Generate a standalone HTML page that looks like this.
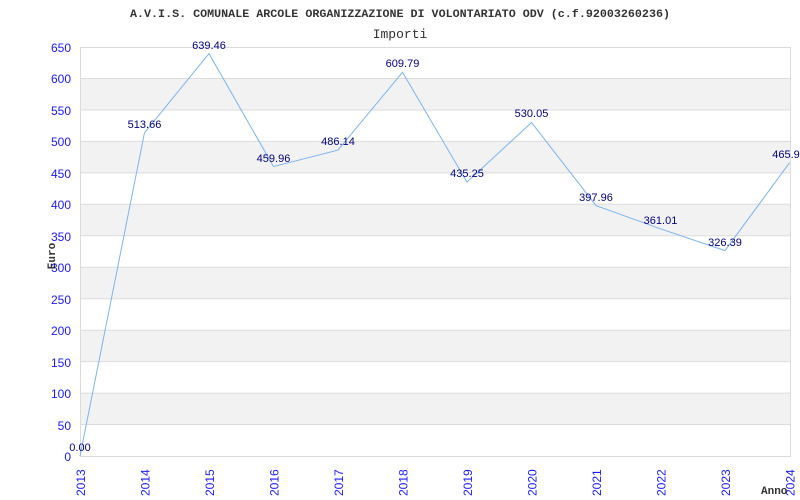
<!DOCTYPE html>
<html><head><style>body{margin:0;background:#fff}svg{display:block}</style></head><body>
<svg width="800" height="500" xmlns="http://www.w3.org/2000/svg" font-family="Liberation Sans, sans-serif">
<rect width="800" height="500" fill="#fff"/>
<g fill="#f2f2f2">
<rect x="80" y="78.5" width="710" height="31.5"/>
<rect x="80" y="141.4" width="710" height="31.5"/>
<rect x="80" y="204.3" width="710" height="31.5"/>
<rect x="80" y="267.2" width="710" height="31.5"/>
<rect x="80" y="330.2" width="710" height="31.5"/>
<rect x="80" y="393.1" width="710" height="31.5"/>
</g>
<g stroke="#dcdcdc" stroke-width="1">
<line x1="80" y1="47.5" x2="790" y2="47.5"/><line x1="80" y1="78.5" x2="790" y2="78.5"/>
<line x1="80" y1="110" x2="790" y2="110"/><line x1="80" y1="141.4" x2="790" y2="141.4"/>
<line x1="80" y1="172.9" x2="790" y2="172.9"/><line x1="80" y1="204.3" x2="790" y2="204.3"/>
<line x1="80" y1="235.8" x2="790" y2="235.8"/><line x1="80" y1="267.2" x2="790" y2="267.2"/>
<line x1="80" y1="298.7" x2="790" y2="298.7"/><line x1="80" y1="330.2" x2="790" y2="330.2"/>
<line x1="80" y1="361.6" x2="790" y2="361.6"/><line x1="80" y1="393.1" x2="790" y2="393.1"/>
<line x1="80" y1="424.5" x2="790" y2="424.5"/><line x1="80" y1="456.5" x2="790" y2="456.5"/>
<line x1="80.5" y1="47" x2="80.5" y2="457"/><line x1="790.5" y1="47" x2="790.5" y2="457"/>
</g>
<text x="130" y="17" textLength="540" lengthAdjust="spacingAndGlyphs" font-family="Liberation Mono, monospace" font-size="11" font-weight="bold" fill="#333">A.V.I.S. COMUNALE ARCOLE ORGANIZZAZIONE DI VOLONTARIATO ODV (c.f.92003260236)</text>
<text x="400" y="38" text-anchor="middle" font-family="Liberation Mono, monospace" font-size="13" fill="#333">Importi</text>
<g fill="#1a1aff" font-size="12" text-anchor="end">
<text x="71" y="52">650</text><text x="71" y="83">600</text><text x="71" y="115">550</text>
<text x="71" y="146">500</text><text x="71" y="178">450</text><text x="71" y="209">400</text>
<text x="71" y="241">350</text><text x="71" y="272">300</text><text x="71" y="304">250</text>
<text x="71" y="335">200</text><text x="71" y="367">150</text><text x="71" y="398">100</text>
<text x="71" y="430">50</text><text x="71" y="461">0</text>
</g>
<text transform="translate(55,256) rotate(-90)" text-anchor="middle" font-family="Liberation Mono, monospace" font-size="11" font-weight="bold" fill="#333">Euro</text>
<g fill="#1a1aff" font-size="12">
<text transform="translate(85,496) rotate(-90)">2013</text>
<text transform="translate(149.5,496) rotate(-90)">2014</text>
<text transform="translate(214,496) rotate(-90)">2015</text>
<text transform="translate(278.5,496) rotate(-90)">2016</text>
<text transform="translate(343,496) rotate(-90)">2017</text>
<text transform="translate(407.5,496) rotate(-90)">2018</text>
<text transform="translate(472,496) rotate(-90)">2019</text>
<text transform="translate(536.5,496) rotate(-90)">2020</text>
<text transform="translate(601,496) rotate(-90)">2021</text>
<text transform="translate(665.5,496) rotate(-90)">2022</text>
<text transform="translate(730,496) rotate(-90)">2023</text>
<text transform="translate(794.5,496) rotate(-90)">2024</text>
</g>
<text x="761" y="494" font-family="Liberation Mono, monospace" font-size="11" font-weight="bold" fill="#333">Anno</text>
<polyline fill="none" stroke="#7ab4f0" stroke-width="1" points="80,456 144.5,132.8 209,53.6 273.5,166.6 338,150.1 402.5,72.3 467,182.1 531.5,122.5 596,205.6 660.5,228.8 725,250.6 789.5,162.8"/>
<g fill="#000080" font-size="11" text-anchor="middle">
<text x="80" y="451">0.00</text>
<text x="144.5" y="128">513.66</text>
<text x="209" y="49">639.46</text>
<text x="273.5" y="162">459.96</text>
<text x="338" y="145">486.14</text>
<text x="402.5" y="67">609.79</text>
<text x="467" y="177">435.25</text>
<text x="531.5" y="117">530.05</text>
<text x="596" y="201">397.96</text>
<text x="660.5" y="224">361.01</text>
<text x="725" y="246">326.39</text>
<text x="786" y="158">465.9</text>
</g>
</svg>
</body></html>
